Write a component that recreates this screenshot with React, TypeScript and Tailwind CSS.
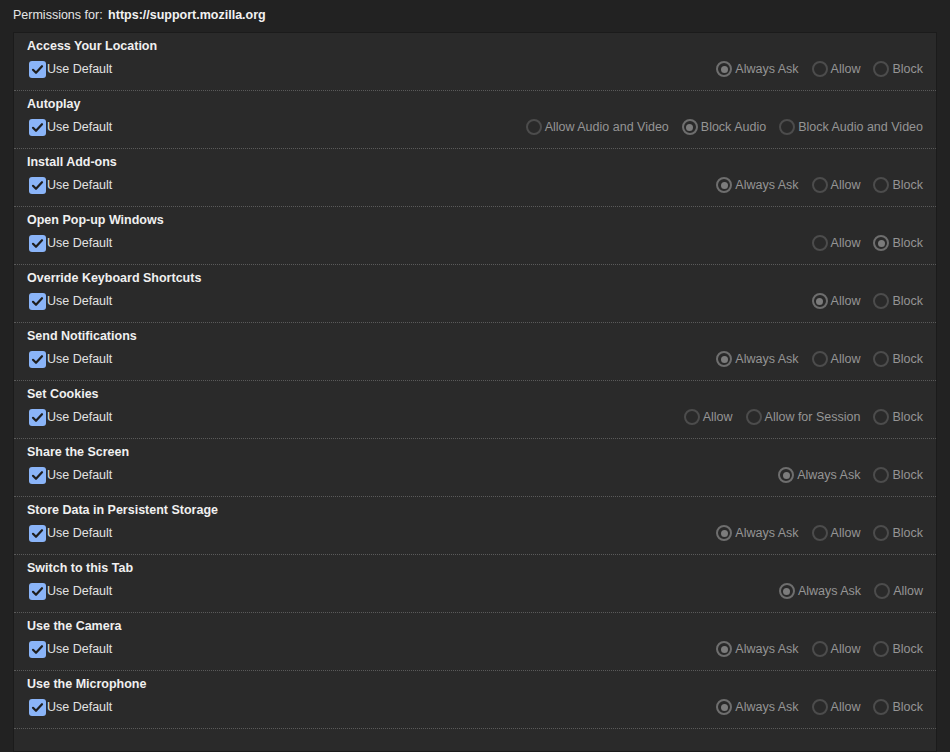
type Perm = {
  title: string;
  options: string[];
  selected: number;
};

const perms: Perm[] = [
  { title: "Access Your Location", options: ["Always Ask", "Allow", "Block"], selected: 0 },
  { title: "Autoplay", options: ["Allow Audio and Video", "Block Audio", "Block Audio and Video"], selected: 1 },
  { title: "Install Add-ons", options: ["Always Ask", "Allow", "Block"], selected: 0 },
  { title: "Open Pop-up Windows", options: ["Allow", "Block"], selected: 1 },
  { title: "Override Keyboard Shortcuts", options: ["Allow", "Block"], selected: 0 },
  { title: "Send Notifications", options: ["Always Ask", "Allow", "Block"], selected: 0 },
  { title: "Set Cookies", options: ["Allow", "Allow for Session", "Block"], selected: -1 },
  { title: "Share the Screen", options: ["Always Ask", "Block"], selected: 0 },
  { title: "Store Data in Persistent Storage", options: ["Always Ask", "Allow", "Block"], selected: 0 },
  { title: "Switch to this Tab", options: ["Always Ask", "Allow"], selected: 0 },
  { title: "Use the Camera", options: ["Always Ask", "Allow", "Block"], selected: 0 },
  { title: "Use the Microphone", options: ["Always Ask", "Allow", "Block"], selected: 0 },
];

function Radio({ label, checked }: { label: string; checked: boolean }) {
  return (
    <div className="flex items-center">
      <span
        className={
          checked
            ? "w-[16px] h-[16px] rounded-full border-2 border-[#6e6e6e] flex items-center justify-center"
            : "w-[16px] h-[16px] rounded-full border-2 border-[#4c4c4c]"
        }
      >
        {checked && <span className="w-[7px] h-[7px] rounded-full bg-[#7c7c7c]" />}
      </span>
      <span className="ml-[3px] text-[#959595]">{label}</span>
    </div>
  );
}

function CheckBox() {
  return (
    <span className="ml-[2px] w-[17px] h-[17px] rounded-[3px] bg-[#8ab4f8] flex items-center justify-center">
      <svg width="13" height="13" viewBox="0 0 13 13">
        <path d="M2 6.8 L5 9.8 L11 3.2" fill="none" stroke="#1e1e1e" strokeWidth="2.2" strokeLinecap="round" strokeLinejoin="round" />
      </svg>
    </span>
  );
}

export default function App() {
  return (
    <div
      className="h-screen flex flex-col bg-[#222222] px-[13px] text-[12.5px] overflow-hidden"
      style={{ fontFamily: '"Liberation Sans", Arial, sans-serif' }}
    >
      <div className="pt-[7px] h-[32px] leading-[16px] text-[#e6e6e6]">
        Permissions for: <span className="font-bold text-[#f2f2f2] ml-[2px]">https://support.mozilla.org</span>
      </div>
      <div className="flex-1 bg-[#2a2a2a] border border-[#1b1b1b]">
        {perms.map((p) => (
          <div key={p.title} className="h-[58px] px-[13px] pt-[5px] border-b border-dotted border-[#5a5a5a]">
            <div className="leading-[16px] font-bold text-[#f0f0f0]">{p.title}</div>
            <div className="mt-[6px] h-[18px] flex items-center justify-between">
              <div className="flex items-center">
                <CheckBox />
                <span className="ml-[1px] text-[#e2e2e2]">Use Default</span>
              </div>
              <div className="flex items-center gap-[13px]">
                {p.options.map((o, i) => (
                  <Radio key={o} label={o} checked={i === p.selected} />
                ))}
              </div>
            </div>
          </div>
        ))}
      </div>
    </div>
  );
}
